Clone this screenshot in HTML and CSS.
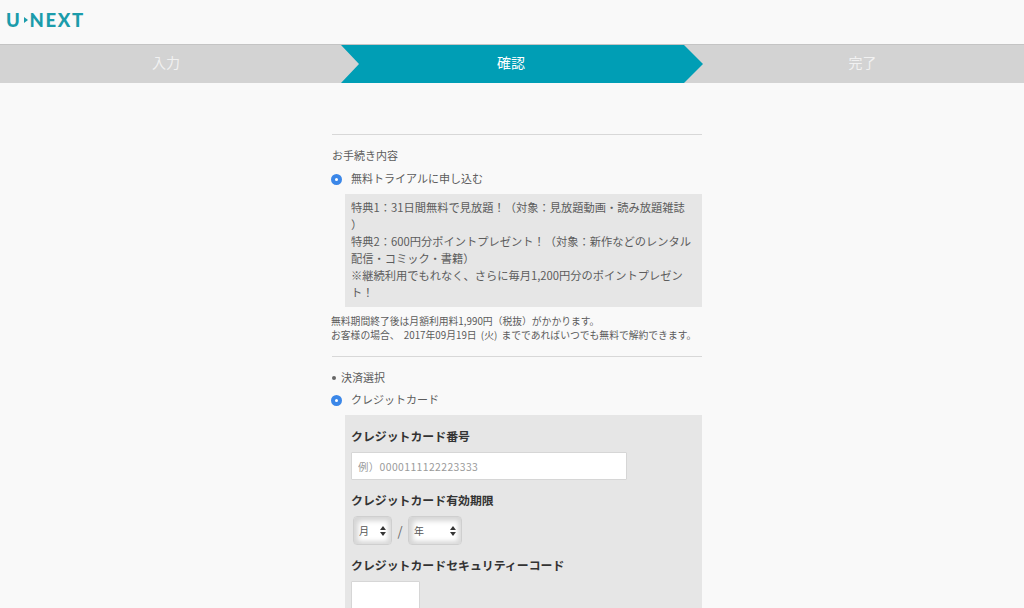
FILE: index.html
```html
<!DOCTYPE html>
<html lang="ja">
<head>
<meta charset="utf-8">
<title>U-NEXT</title>
<link rel="stylesheet" href="styles.css">
</head>
<body>
<header class="header">
  <div class="logo">U<svg class="logo-arrow" viewBox="0 0 4 6" width="4" height="6"><path d="M0 0L4 3L0 6Z" fill="#1b9cab"/></svg>NEXT</div>
</header>
<nav class="steps">
  <div class="step step-first">入力</div>
  <div class="step step-current">確認</div>
  <div class="step step-last">完了</div>
</nav>
<main class="main">
  <div class="column">
    <hr class="rule rule-first">
    <p class="heading">お手続き内容</p>
    <div class="radio-row"><span class="radio"></span><span>無料トライアルに申し込む</span></div>
    <div class="offer">特典1：31日間無料で見放題！（対象：見放題動画・読み放題雑誌<br>）<br>特典2：600円分ポイントプレゼント！（対象：新作などのレンタル配信・コミック・書籍）<br>※継続利用でもれなく、さらに毎月1,200円分のポイントプレゼント！</div>
    <p class="note">無料期間終了後は月額利用料1,990円（税抜）がかかります。<br>お客様の場合、 2017年09月19日 (火) までであればいつでも無料で解約できます。</p>
    <hr class="rule rule-second">
    <p class="bullet-heading"><span class="bullet"></span>決済選択</p>
    <div class="radio-row radio-row-card"><span class="radio"></span><span>クレジットカード</span></div>
    <form class="card-box">
      <label class="field-label">クレジットカード番号</label>
      <input class="text-input card-number" type="text" placeholder="例）0000111122223333">
      <label class="field-label">クレジットカード有効期限</label>
      <div class="expiry">
        <select class="select select-month"><option>月</option></select>
        <span class="slash">/</span>
        <select class="select select-year"><option>年</option></select>
      </div>
      <label class="field-label">クレジットカードセキュリティーコード</label>
      <input class="text-input card-code" type="text">
    </form>
  </div>
</main>
</body>
</html>
```
FILE: styles.css
```css
* { box-sizing: border-box; }
html, body { margin: 0; height: 608px; overflow: hidden; }
body {
  background: #f9f9f9;
  color: #5c5c5c;
  font-family: "Noto Sans CJK JP", "Noto Sans", sans-serif;
  font-size: 11px;
}
.header {
  height: 45px;
  border-bottom: 1px solid #c4c4c4;
  padding: 9px 0 0 6px;
}
.logo {
  display: flex;
  align-items: center;
  height: 22px;
  font-family: Lato, sans-serif;
  font-weight: 900;
  font-size: 18.5px;
  letter-spacing: 1.7px;
  color: #1b9cab;
  line-height: 22px;
}
.logo-arrow { margin: 0 2px 0 2px; }
.steps {
  display: flex;
  height: 38px;
  background: #d3d3d3;
  color: #f1f1f1;
  font-size: 14px;
  line-height: 35px;
  text-align: center;
}
.step-first { width: 341px; padding-right: 9px; }
.step-current {
  width: 362px;
  padding-right: 22px;
  background: #009eb5;
  color: #fff;
  clip-path: polygon(0 0, 343px 0, 100% 50%, 343px 100%, 0 100%, 18px 50%);
}
.step-last { flex: 1; padding-right: 2px; }
.main {
  display: flex;
  padding: 51px 0 0 332px;
}
.column { width: 370px; }
.rule {
  margin: 0;
  border: 0;
  height: 1px;
  background: #d8d8d8;
}
p { margin: 0; }
.heading { margin-top: 12px; line-height: 17px; }
.radio-row {
  display: flex;
  align-items: center;
  gap: 9px;
  margin: 6px 0 7px -1px;
  line-height: 17px;
  height: 17px;
}
.radio {
  width: 11px;
  height: 11px;
  margin-top: 2px;
  border-radius: 50%;
  background: #fff;
  border: 4px solid #3b87e8;
  flex: none;
}
.offer {
  margin-left: 13px;
  padding: 5px 6px 4px;
  height: 113px;
  background: #e6e6e6;
  font-size: 11.25px;
  line-height: 17px;
  word-break: break-all;
}
.note {
  margin: 7px 0 0 -1px;
  font-size: 9.8px;
  line-height: 14px;
  white-space: nowrap;
  word-spacing: 2px;
}
.rule-second { margin-top: 14px; }
.bullet-heading {
  display: flex;
  align-items: center;
  gap: 5px;
  margin: 12px 0 0 0;
  line-height: 17px;
}
.bullet {
  width: 4px;
  height: 4px;
  border-radius: 50%;
  background: #666;
}
.radio-row-card { margin-top: 5px; margin-bottom: 7px; }
.card-box {
  display: flex;
  flex-direction: column;
  align-items: flex-start;
  margin-left: 13px;
  padding: 13px 6px 0;
  height: 300px;
  background: #e6e6e6;
}
.field-label {
  font-weight: 700;
  font-size: 11.9px;
  line-height: 16px;
  color: #333;
}
.text-input {
  display: block;
  margin: 8px 0 12px;
  height: 28px;
  background: #fff;
  border: 1px solid #d6d6d6;
  border-radius: 1px;
  padding: 0 6px;
  font-family: inherit;
  font-size: 10.4px;
  letter-spacing: 0.4px;
  color: #555;
}
.text-input::placeholder { color: #9a9a9a; opacity: 1; }
.card-number { width: 276px; }
.card-code { width: 69px; height: 40px; }
.expiry {
  display: flex;
  align-items: center;
  margin: 8px 0 12px 2px;
}
.select {
  appearance: none;
  height: 29px;
  border: 1px solid #cfcfcf;
  border-radius: 4px;
  padding: 0 0 0 5px;
  font-family: inherit;
  font-size: 10px;
  color: #555;
  box-shadow: inset 4px 4px 5px #d6d6d6, inset -3px -3px 4px #dadada;
  background-color: #fff;
  background-image: url("data:image/svg+xml,%3Csvg xmlns='http://www.w3.org/2000/svg' width='6' height='10'%3E%3Cpath d='M3 0L6 4H0ZM3 10L0 6H6Z' fill='%23333'/%3E%3C/svg%3E");
  background-repeat: no-repeat;
  background-position: right 5px center;
}
.select-month { width: 39px; }
.select-year { width: 54px; }
.slash { width: 16px; text-align: center; font-size: 13px; color: #666; }
```
